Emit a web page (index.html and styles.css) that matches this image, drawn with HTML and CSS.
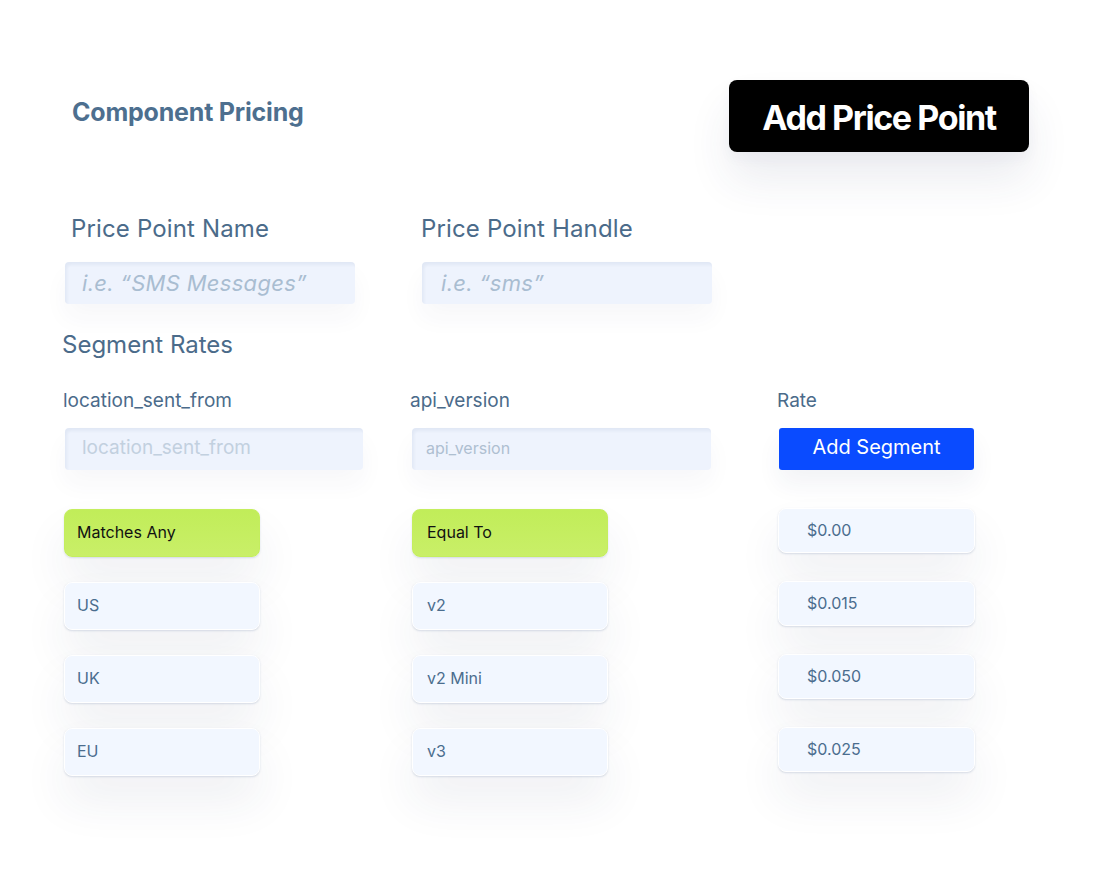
FILE: index.html
```html
<!DOCTYPE html>
<html lang="en">
<head>
<meta charset="utf-8">
<title>Component Pricing</title>
<link rel="stylesheet" href="styles.css">
</head>
<body>
<div class="page">
  <header class="header">
    <h1 class="title">Component Pricing</h1>
    <button class="btn-black">Add Price Point</button>
  </header>

  <section class="fields">
    <div class="field field-name">
      <div class="label label-name">Price Point Name</div>
      <div class="input input-lg">i.e. “SMS Messages”</div>
    </div>
    <div class="field field-handle">
      <div class="label label-handle">Price Point Handle</div>
      <div class="input input-lg input-handle">i.e. “sms”</div>
    </div>
  </section>

  <h2 class="section-title">Segment Rates</h2>

  <section class="grid">
    <div class="colhead">
      <div class="col-label">location_sent_from</div>
      <div class="input input-md input-c1">location_sent_from</div>
    </div>
    <div class="colhead">
      <div class="col-label">api_version</div>
      <div class="input input-sm input-c2">api_version</div>
    </div>
    <div class="colhead">
      <div class="col-label">Rate</div>
      <button class="btn-blue">Add Segment</button>
    </div>

    <div class="card green c1">Matches Any</div>
    <div class="card green c2">Equal To</div>
    <div class="card rate">$0.00</div>

    <div class="card c1">US</div>
    <div class="card c2">v2</div>
    <div class="card rate">$0.015</div>

    <div class="card c1">UK</div>
    <div class="card c2">v2 Mini</div>
    <div class="card rate">$0.050</div>

    <div class="card c1">EU</div>
    <div class="card c2">v3</div>
    <div class="card rate">$0.025</div>
  </section>
</div>
</body>
</html>
```

FILE: styles.css
```css
* { box-sizing: border-box; }
html, body { margin: 0; padding: 0; background: #ffffff; }
body {
  font-family: Inter, "Noto Sans", "Liberation Sans", sans-serif;
  color: #4b6b8a;
  width: 1101px;
  height: 871px;
  overflow: hidden;
}
.page { padding-top: 80px; }

.header {
  display: flex;
  justify-content: space-between;
  align-items: center;
  padding: 0 72px 0 72px;
}
.title {
  margin: 0 0 8px 0;
  font-size: 25px;
  font-weight: 700;
  letter-spacing: -0.2px;
  line-height: 30px;
  color: #4d6f8f;
}
.btn-black {
  width: 300px;
  height: 72px;
  border: none;
  border-radius: 8px;
  background: #000000;
  color: #ffffff;
  font-family: Inter, "Liberation Sans", sans-serif;
  font-size: 34px;
  font-weight: 700;
  letter-spacing: -1.4px;
  box-shadow: 0 28px 44px rgba(40, 50, 100, 0.09), 0 6px 14px rgba(40, 50, 100, 0.04);
  padding: 3px 0 0 0;
}

.fields {
  display: flex;
  padding-left: 65px;
  margin-top: 62px;
}
.field { width: 290px; }
.field-handle { margin-left: 67px; }
.label {
  font-size: 24px;
  line-height: 30px;
  color: #4b6b8a;
  margin-bottom: 18px;
  letter-spacing: 0.15px;
}
.label-name { margin-left: 6px; }
.label-handle { margin-left: -1px; }

.input {
  background: #eef3fd;
  border-radius: 4px;
  box-shadow: inset 2px 3px 3px rgba(40, 60, 120, 0.06), 0 14px 24px rgba(40, 50, 100, 0.04);
  display: flex;
  align-items: center;
}
.input-lg {
  height: 42px;
  padding-left: 17px;
  font-size: 22px;
  font-style: italic;
  color: #a9bdd1;
  letter-spacing: 0.3px;
}
.input-handle { padding-left: 19px; }

.section-title {
  margin: 26px 0 0 0;
  padding-left: 62px;
  font-size: 24px;
  font-weight: 400;
  line-height: 30px;
  color: #4b6b8a;
}

.grid {
  display: grid;
  grid-template-columns: 347px 367px 197px;
  row-gap: 25px;
  padding-left: 64px;
  margin-top: 29px;
}
.colhead { margin-bottom: 14px; }
.col-label {
  font-size: 19px;
  line-height: 24px;
  color: #4b6b8a;
  margin-bottom: 15px;
  margin-left: -1px;
}
.input-md {
  width: 298px;
  height: 42px;
  margin-left: 1px;
  padding-left: 17px;
  padding-bottom: 3px;
  font-size: 19px;
  color: #c2d0df;
}
.input-sm {
  width: 299px;
  height: 42px;
  margin-left: 1px;
  padding-left: 14px;
  padding-bottom: 2px;
  font-size: 16px;
  color: #aebfd1;
}
.btn-blue {
  display: block;
  width: 195px;
  height: 42px;
  margin-left: 1px;
  border: none;
  border-radius: 3px;
  background: #0a4bff;
  color: #ffffff;
  font-family: Inter, "Liberation Sans", sans-serif;
  font-size: 20px;
  font-weight: 400;
  padding: 0 0 4px 0;
  box-shadow: 0 14px 24px rgba(40, 50, 100, 0.06);
}

.card {
  height: 48px;
  width: 196px;
  border-radius: 8px;
  background: #f2f7ff;
  border: 1px solid #ffffff;
  box-shadow: 0 1px 2px rgba(60, 90, 140, 0.18), 0 26px 46px rgba(40, 50, 100, 0.075);
  display: flex;
  align-items: center;
  padding-left: 12px;
  padding-bottom: 2px;
  font-size: 16px;
  color: #4b6d8e;
}
.card.c2 { margin-left: 1px; padding-left: 14px; }
.card.green {
  background: linear-gradient(180deg, #c1ed59 0%, #c9ef68 100%);
  border-color: #c4ee5e;
  color: #111111;
}
.card.rate {
  height: 45px;
  width: 197px;
  margin-top: -1px;
  padding-left: 28px;
}
```
